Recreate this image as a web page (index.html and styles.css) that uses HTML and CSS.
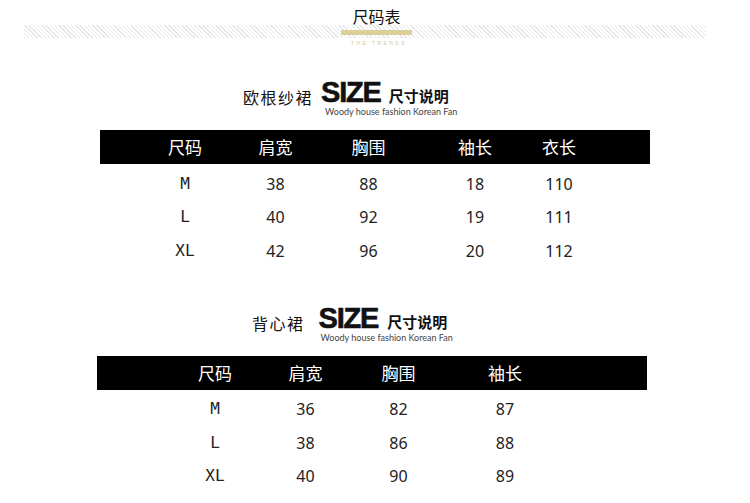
FILE: index.html
```html
<!DOCTYPE html>
<html lang="zh">
<head>
<meta charset="utf-8">
<title>尺码表</title>
<link rel="stylesheet" href="styles.css">
</head>
<body>
<div class="page">
  <header class="top">
    <h1 class="title">尺码表</h1>
    <div class="band"><span class="gold"></span></div>
    <p class="trends">THE TRENDS</p>
  </header>

  <section class="block block-1">
    <div class="heading">
      <span class="label">欧根纱裙</span>
      <div class="size-block">
        <div class="size-row"><span class="size">SIZE</span><span class="desc">尺寸说明</span></div>
        <div class="sub">Woody house fashion Korean Fan</div>
      </div>
    </div>
    <div class="table">
      <div class="row thead"><span>尺码</span><span>肩宽</span><span>胸围</span><span>袖长</span><span>衣长</span></div>
      <div class="body">
        <div class="row"><span class="sz">M</span><span>38</span><span>88</span><span>18</span><span>110</span></div>
        <div class="row"><span class="sz">L</span><span>40</span><span>92</span><span>19</span><span>111</span></div>
        <div class="row"><span class="sz">XL</span><span>42</span><span>96</span><span>20</span><span>112</span></div>
      </div>
    </div>
  </section>

  <section class="block block-2">
    <div class="heading">
      <span class="label">背心裙</span>
      <div class="size-block">
        <div class="size-row"><span class="size">SIZE</span><span class="desc">尺寸说明</span></div>
        <div class="sub">Woody house fashion Korean Fan</div>
      </div>
    </div>
    <div class="table">
      <div class="row thead"><span>尺码</span><span>肩宽</span><span>胸围</span><span>袖长</span></div>
      <div class="body">
        <div class="row"><span class="sz">M</span><span>36</span><span>82</span><span>87</span></div>
        <div class="row"><span class="sz">L</span><span>38</span><span>86</span><span>88</span></div>
        <div class="row"><span class="sz">XL</span><span>40</span><span>90</span><span>89</span></div>
      </div>
    </div>
  </section>
</div>
</body>
</html>
```

FILE: styles.css
```css
* { box-sizing: border-box; }
html, body { margin: 0; padding: 0; background: #fff; }
body {
  font-family: "Noto Sans CJK SC", "Noto Sans", sans-serif;
  color: #111;
  width: 750px;
  height: 503px;
  overflow: hidden;
}

.top { padding-top: 8px; }
.title {
  margin: 0;
  padding-left: 3px;
  font-size: 16px;
  line-height: 16px;
  font-weight: 400;
  text-align: center;
  color: #111;
}
.band {
  margin: 1px 44px 0 24px;
  height: 13px;
  padding-top: 5px;
  background: repeating-linear-gradient(45deg, #e6e6e6 0 1px, #fff 1px 3px);
}
.gold {
  display: block;
  width: 71px;
  height: 5px;
  margin-left: 317px;
  background: #dcd09a;
}
.trends {
  margin: 3px 0 0;
  padding-left: 8px;
  font-family: "Liberation Sans", sans-serif;
  font-size: 5px;
  line-height: 5px;
  letter-spacing: 2.4px;
  text-align: center;
  color: #d8c68a;
}

.block-1 { margin-top: 32px; }
.block-2 { margin-top: 36px; }

.heading { display: flex; align-items: flex-start; }
.block-1 .heading { padding-left: 243px; }
.block-2 .heading { padding-left: 252px; }
.label {
  margin-top: 11px;
  font-size: 16px;
  line-height: 16px;
  letter-spacing: 1.5px;
  color: #111;
}
.size-block { display: flex; flex-direction: column; }
.block-1 .size-block { margin-left: 8px; }
.block-2 .size-block { margin-left: 14px; }
.size-row { display: flex; align-items: flex-start; }
.size {
  font-family: "Liberation Sans", Arial, sans-serif;
  font-weight: 700;
  font-size: 29px;
  line-height: 29px;
  letter-spacing: -1.2px;
  color: #111;
  -webkit-text-stroke: 0.6px #111;
}
.desc {
  margin-top: 10px;
  font-size: 15px;
  line-height: 15px;
  font-weight: 700;
  color: #111;
}
.block-1 .desc { margin-left: 8px; }
.block-2 .desc { margin-left: 9px; }
.sub {
  font-family: Lato, "Liberation Sans", sans-serif;
  font-size: 9px;
  line-height: 10px;
  color: #444;
}
.block-1 .sub { margin-left: 4px; }
.block-2 .sub { margin-left: 2px; }

.table { margin-top: 13px; width: 550px; }
.block-1 .table { margin-left: 100px; }
.block-2 .table { margin-left: 97px; }

.row {
  display: grid;
  grid-template-columns: 90px 91px 95px 118px 50px;
  align-items: center;
  height: 33.5px;
  font-family: "Noto Sans", sans-serif;
  font-size: 16px;
  color: #222;
}
.block-1 .row { padding-left: 40px; }
.block-2 .row { padding-left: 73px; }
.row span { text-align: center; line-height: 20px; }
.thead {
  height: 34px;
  background: #000;
  color: #fff;
  font-family: "Noto Sans CJK SC", sans-serif;
  font-size: 17px;
}
.body { padding-top: 3px; }
.sz { font-family: "DejaVu Sans Mono", "Liberation Mono", monospace; }
```
